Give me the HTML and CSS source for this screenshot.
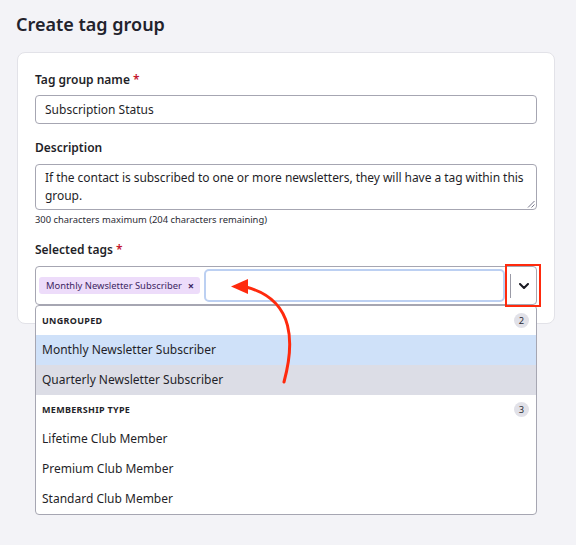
FILE: index.html
```html
<!DOCTYPE html>
<html lang="en">
<head>
<meta charset="utf-8">
<title>Create tag group</title>
<link rel="stylesheet" href="styles.css">
</head>
<body>
<div class="page">
  <h1 class="title">Create tag group</h1>
  <div class="card">
    <div class="field">
      <div class="label">Tag group name <span class="req">*</span></div>
      <div class="input">Subscription Status</div>
    </div>
    <div class="field">
      <div class="label">Description</div>
      <div class="textarea">If the contact is subscribed to one or more newsletters, they will have a tag within this group.
        <svg class="grip" width="8" height="8" viewBox="0 0 8 8"><path d="M7.5 1 L1 7.5 M7.5 4.5 L4.5 7.5" stroke="#77778a" stroke-width="1" fill="none"/></svg>
      </div>
      <div class="help">300 characters maximum (204 characters remaining)</div>
    </div>
    <div class="field last">
      <div class="label">Selected tags <span class="req">*</span></div>
      <div class="select">
        <span class="chip">Monthly Newsletter Subscriber <span class="chip-x">×</span></span>
        <span class="search"></span>
        <span class="indicator">
          <span class="sep"></span>
          <span class="chev"><svg width="10" height="6" viewBox="0 0 10 6"><path d="M1 1 L5 5 L9 1" stroke="#1a1a22" stroke-width="2" fill="none" stroke-linecap="round" stroke-linejoin="round"/></svg></span>
        </span>
        <div class="menu">
          <div class="group-head"><span>UNGROUPED</span><span class="badge">2</span></div>
          <div class="option focused">Monthly Newsletter Subscriber</div>
          <div class="option hovered">Quarterly Newsletter Subscriber</div>
          <div class="group-head"><span>MEMBERSHIP TYPE</span><span class="badge">3</span></div>
          <div class="option">Lifetime Club Member</div>
          <div class="option">Premium Club Member</div>
          <div class="option">Standard Club Member</div>
        </div>
      </div>
    </div>
  </div>
  <div class="callout-box"></div>
  <svg class="arrow" width="576" height="545" viewBox="0 0 576 545">
    <path d="M284 382 C294 345 296 300 246 287" stroke="#ff2a0d" stroke-width="3" fill="none" stroke-linecap="round"/>
    <polygon points="231,286.5 248,279 248,294" fill="#ff2a0d"/>
  </svg>
</div>
</body>
</html>
```

FILE: styles.css
```css
* { box-sizing: border-box; }
html, body {
  margin: 0;
  padding: 0;
  background: #f3f3f7;
}
body {
  font-family: "Noto Sans", "Open Sans", sans-serif;
  color: #1f1f29;
  width: 576px;
  height: 545px;
  overflow: hidden;
}
.page {
  position: relative;
  padding: 12px 0 0 16px;
  height: 545px;
}
.title {
  margin: 0 0 16px 0;
  font-size: 18px;
  line-height: 24px;
  font-weight: 600;
  color: #22222c;
}
.card {
  margin-left: 1px;
  width: 538px;
  background: #fff;
  border: 1px solid #e2e2e8;
  border-radius: 8px;
  padding: 19px 17px 18px 17px;
}
.field { margin-bottom: 16px; }
.field.last { margin-bottom: 0; }
.label {
  font-size: 12px;
  line-height: 16px;
  font-weight: 600;
  margin-bottom: 7px;
  color: #1f1f29;
}
.req { color: #c4162e; }
.input {
  height: 29px;
  border: 1px solid #a6a6b2;
  border-radius: 4px;
  padding: 0 9px;
  font-size: 12px;
  line-height: 27px;
}
.textarea {
  position: relative;
  height: 46px;
  margin-top: 8px;
  border: 1px solid #a6a6b2;
  border-radius: 4px;
  padding: 4px 2px 4px 9px;
  font-size: 12px;
  letter-spacing: -0.05px;
  line-height: 18px;
}
.grip {
  position: absolute;
  right: 1px;
  bottom: 1px;
}
.help {
  margin-top: 4px;
  font-size: 9.4px;
  line-height: 12px;
  color: #2a2a33;
}
.select {
  position: relative;
  margin-top: 8px;
  height: 39px;
  border: 1px solid #a6a6b2;
  border-radius: 4px;
  display: flex;
  align-items: center;
  padding-left: 3px;
}
.chip {
  display: flex;
  align-items: center;
  height: 17px;
  padding: 0 6px 0 7px;
  background: #eddcfa;
  border-radius: 3px;
  font-size: 9.4px;
  color: #3e2763;
  white-space: nowrap;
}
.chip-x {
  margin-left: 6px;
  font-weight: 700;
  font-size: 11px;
  line-height: 1;
}
.search {
  flex: 1;
  height: 33px;
  margin-left: 4px;
  border: 2px solid #bcd0f2;
  border-radius: 5px;
}
.indicator {
  display: flex;
  align-items: center;
  padding-left: 5px;
}
.sep {
  width: 1px;
  height: 24px;
  background: #9a9aa6;
}
.chev {
  width: 25px;
  display: flex;
  justify-content: center;
  align-items: center;
}
.menu {
  position: absolute;
  top: 38px;
  left: -1px;
  right: -1px;
  background: #fff;
  border: 1px solid #a6a6b2;
  border-radius: 4px;
  overflow: hidden;
}
.group-head {
  height: 29px;
  display: flex;
  align-items: center;
  justify-content: space-between;
  padding: 0 7px 0 6px;
  font-size: 9px;
  font-weight: 700;
  letter-spacing: 0.3px;
  color: #1f1f29;
}
.badge {
  width: 15px;
  height: 15px;
  border-radius: 50%;
  background: #e1e1e8;
  font-size: 9.4px;
  font-weight: 400;
  letter-spacing: 0;
  display: flex;
  align-items: center;
  justify-content: center;
  color: #2a2a33;
}
.option {
  height: 30px;
  padding: 0 6px;
  font-size: 12px;
  line-height: 30px;
  color: #1f1f29;
}
.option.focused { background: #cfe1f9; }
.option.hovered { background: #dcdde6; }
.callout-box {
  position: absolute;
  left: 505px;
  top: 264px;
  width: 36px;
  height: 43px;
  border: 2.5px solid #ff2a0d;
}
.arrow {
  position: absolute;
  left: 0;
  top: 0;
  pointer-events: none;
}
```
